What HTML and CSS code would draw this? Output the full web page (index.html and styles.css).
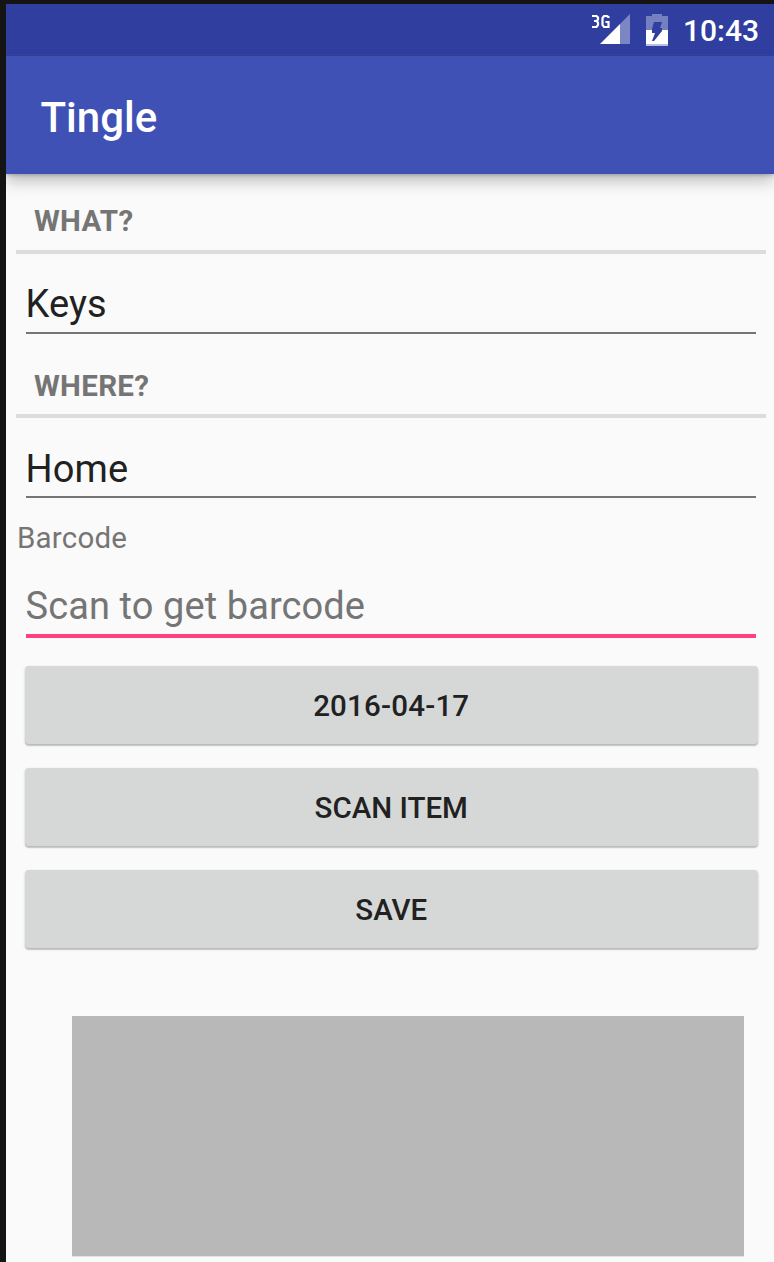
FILE: index.html
```html
<!DOCTYPE html>
<html lang="en">
<head>
<meta charset="utf-8">
<title>Tingle</title>
<link rel="stylesheet" href="styles.css">
</head>
<body>
<div class="screen">
  <header class="status-bar">
    <svg class="signal" width="40" height="36" viewBox="0 0 40 36">
      <path d="M8 32L28 12V32Z" fill="#fff"/>
      <path d="M28 12L38 2V32H28Z" fill="#7c86c5"/>
      <g fill="none" stroke="#fff" stroke-width="2.200">
        <path d="M0 4H4.500L6 5.500V7.500L4.500 9H2M4.500 9L6 10.500V13L4.500 15H0"/>
        <path d="M16.500 6V5L15 4H12L10.500 6V13L12 15H16.500V10H13.500"/>
      </g>
    </svg>
    <svg class="battery" width="22" height="32" viewBox="0 0 22 32">
      <path d="M6 0H16V2H22V16H0V2H6Z" fill="#7580c1"/>
      <path d="M0 16H22V30H0Z" fill="#fff"/>
      <path d="M0 30H22V32H0Z" fill="#b9bfe0"/>
      <path d="M8 8H16L14 14H16V17L8 27H6L9 19H6V15Z" fill="#303f9f"/>
    </svg>
    <span class="clock">10:43</span>
  </header>
  <div class="app-bar"><h1 class="title">Tingle</h1></div>
  <main class="form">
    <h2 class="section">What?</h2>
    <div class="field field-what">Keys</div>
    <h2 class="section section-where">Where?</h2>
    <div class="field field-where">Home</div>
    <div class="label">Barcode</div>
    <div class="field field-active">Scan to get barcode</div>
    <div class="actions">
      <button class="button button-date">2016-04-17</button>
      <button class="button">Scan item</button>
      <button class="button">Save</button>
    </div>
    <div class="photo"></div>
  </main>
</div>
</body>
</html>
```
FILE: styles.css
```css
* { box-sizing: border-box; }
body {
  margin: 0;
  padding: 4px 0 0 6px;
  height: 1262px;
  overflow: hidden;
  background: #141414;
  font-family: Roboto, sans-serif;
}
.screen {
  height: 1258px;
  background: #fafafa;
  overflow: hidden;
}
.status-bar {
  display: flex;
  justify-content: flex-end;
  align-items: flex-start;
  height: 52px;
  padding-right: 15px;
  background: #303f9f;
  border-bottom: 2px solid #3545a3;
}
.signal { margin: 8px 14px 0 0; }
.battery { margin: 10px 15px 0 0; }
.clock {
  color: #fff;
  font-size: 30px;
  font-weight: 500;
  line-height: 54px;
}
.app-bar {
  display: flex;
  align-items: center;
  height: 118px;
  padding: 4px 0 0 34.5px;
  background: #3f51b5;
  box-shadow: 0 8px 14px rgba(0, 0, 0, .22), 0 1px 4px rgba(0, 0, 0, .25);
}
.title {
  margin: 0;
  color: #fff;
  font-size: 42px;
  font-weight: 500;
}
.form {
  display: flex;
  flex-direction: column;
  padding: 18px 8px 0 10px;
}
.section {
  margin: 0;
  height: 62px;
  padding-left: 18px;
  border-bottom: 4px solid #dcdcdc;
  color: #757575;
  font-size: 29.5px;
  font-weight: 700;
  letter-spacing: .3px;
  line-height: 58px;
  text-transform: uppercase;
}
.section-where {
  height: 60px;
  margin-top: 24px;
  line-height: 56px;
}
.field {
  margin: 0 10px;
  border-bottom: 2px solid #757575;
  color: #212121;
  font-size: 38px;
  letter-spacing: .1px;
  line-height: 60px;
  text-indent: -.5px;
}
.field-what { height: 60px; margin-top: 20px; }
.field-where { height: 60px; margin-top: 20px; line-height: 62px; }
.label {
  margin-top: 20px;
  height: 40px;
  padding-left: 1px;
  color: #757575;
  font-size: 29.5px;
  letter-spacing: .2px;
  line-height: 40px;
}
.field-active {
  height: 62px;
  margin-top: 18px;
  border-bottom: 4px solid #ff4081;
  color: #757575;
}
.actions {
  display: flex;
  flex-direction: column;
  gap: 24px;
  margin: 28px 8.5px 0 9px;
}
.button {
  height: 78px;
  padding: 1px 0 0;
  border: 0;
  border-radius: 4px;
  background: #d6d8d7;
  box-shadow: 0 2px 1px rgba(0, 0, 0, .16), 0 1px 3px rgba(0, 0, 0, .16);
  color: #212121;
  font-family: inherit;
  font-size: 29.5px;
  font-weight: 500;
  text-transform: uppercase;
}
.button-date { letter-spacing: .2px; }
.photo {
  width: 672px;
  height: 241px;
  margin: 68px 0 0 56px;
  background: #b8b8b8;
  border-bottom: 1px solid #e2e2e2;
}
```
